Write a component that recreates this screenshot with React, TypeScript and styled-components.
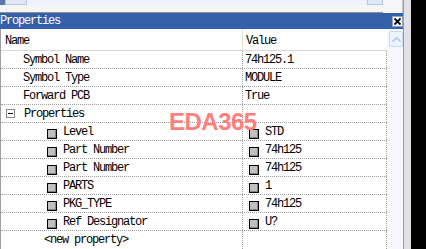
import { FC } from 'react';
import styled, { createGlobalStyle } from 'styled-components';

const GlobalStyle = createGlobalStyle`
  html, body { margin: 0; padding: 0; background: #000; }
  * { box-sizing: border-box; }
`;

const mono = `'Liberation Mono', 'DejaVu Sans Mono', monospace`;

type Child = { name: string; value: string };

const topRows: Child[] = [
  { name: 'Symbol Name', value: '74h125.1' },
  { name: 'Symbol Type', value: 'MODULE' },
  { name: 'Forward PCB', value: 'True' },
];

const childRows: Child[] = [
  { name: 'Level', value: 'STD' },
  { name: 'Part Number', value: '74h125' },
  { name: 'Part Number', value: '74h125' },
  { name: 'PARTS', value: '1' },
  { name: 'PKG_TYPE', value: '74h125' },
  { name: 'Ref Designator', value: 'U?' },
];

const App: FC = () => (
  <>
    <GlobalStyle />
    <Page>
      <Main>
        <TopStrip>
          <StripEdge />
          <StripButton />
          <StripFill />
          <StripButton />
          <StripTail />
        </TopStrip>
        <Gap />
        <TitleBar>
          <Title>Properties</Title>
          <CloseButton>
            <svg width="7" height="7" viewBox="0 0 7 7">
              <path d="M0.5 0.5 L6.5 6.5 M6.5 0.5 L0.5 6.5" stroke="#000" strokeWidth="1.8" />
            </svg>
          </CloseButton>
        </TitleBar>
        <Body>
          <Grid>
            <HeaderRow>
              <HeaderCell>Name</HeaderCell>
              <HeaderCell $value>Value</HeaderCell>
            </HeaderRow>
            {topRows.map((row) => (
              <Row key={row.name}>
                <NameCell $indent={22}>{row.name}</NameCell>
                <ValueCell>{row.value}</ValueCell>
              </Row>
            ))}
            <Row>
              <NameCell $indent={5}>
                <Toggle>
                  <svg width="5" height="1" viewBox="0 0 5 1">
                    <rect width="5" height="1" fill="#000" />
                  </svg>
                </Toggle>
                Properties
              </NameCell>
              <ValueCell />
            </Row>
            {childRows.map((row, i) => (
              <Row key={i}>
                <NameCell $indent={46}>
                  <Check />
                  {row.name}
                </NameCell>
                <ValueCell $indent={6}>
                  <Check />
                  {row.value}
                </ValueCell>
              </Row>
            ))}
            <Row $last>
              <NameCell $indent={43}>&lt;new property&gt;</NameCell>
              <ValueCell />
            </Row>
            <Watermark>EDA365</Watermark>
          </Grid>
          <Scrollbar>
            <ScrollUp>
              <svg width="9" height="5" viewBox="0 0 9 5">
                <path d="M0.5 4.5 L4.5 0.8 L8.5 4.5" fill="none" stroke="#b5c9e6" strokeWidth="1.6" />
              </svg>
            </ScrollUp>
          </Scrollbar>
        </Body>
      </Main>
      <Divider />
      <Frame />
    </Page>
  </>
);

export default App;

const Page = styled.div`
  display: flex;
  width: 426px;
  height: 249px;
  overflow: hidden;
  background: #000;
  font-family: ${mono};
  font-size: 12px;
  letter-spacing: -1.2px;
`;

const Main = styled.div`
  display: flex;
  flex-direction: column;
  width: 403px;
  background: #ffffff;
`;

const TopStrip = styled.div`
  display: flex;
  height: 13px;
  background: #f6f6f8;
  border-bottom: 1px solid #8f8f96;
  align-items: flex-start;
`;

const StripEdge = styled.div`
  width: 5px;
  height: 5px;
  background: #5b78a8;
`;

const StripButton = styled.div`
  width: 16px;
  height: 5px;
  background: #dde7f6;
  border: 1px solid #b4c6e2;
  border-top: none;
  &:nth-child(2) { width: 22px; }
`;

const StripFill = styled.div`
  flex: 1;
  height: 5px;
  background: #f0f3fa;
`;

const StripTail = styled.div`
  width: 20px;
  height: 13px;
  border-right: 1px solid #c8c8d0;
  background: #f6f6f8;
`;

const Gap = styled.div`
  height: 2px;
  background: #dcdbe0;
`;

const TitleBar = styled.div`
  display: flex;
  align-items: center;
  justify-content: space-between;
  height: 16px;
  background: #3461a9;
  padding-right: 0;
`;

const Title = styled.span`
  color: #ffffff;
  line-height: 16px;
`;

const CloseButton = styled.div`
  display: flex;
  align-items: center;
  justify-content: center;
  width: 11px;
  height: 11px;
  margin-top: 1px;
  background: #f4f4f4;
  border: 1px solid #9aa4b8;
`;

const Body = styled.div`
  display: flex;
  flex: 1;
`;

const Grid = styled.div`
  position: relative;
  width: 387px;
  border-left: 1px solid #a0a0a0;
  background: #ffffff;
`;

const HeaderRow = styled.div`
  display: grid;
  grid-template-columns: 242px 144px;
  height: 22px;
  border-bottom: 1px solid #d8d8d8;
`;

const HeaderCell = styled.div<{ $value?: boolean }>`
  display: flex;
  align-items: center;
  padding-left: ${({ $value }) => ($value ? 3 : 4)}px;
  padding-top: 2px;
  color: #000;
  border-right: 1px solid ${({ $value }) => ($value ? 'transparent' : '#e4e4e4')};
`;

const Row = styled.div<{ $last?: boolean }>`
  display: grid;
  grid-template-columns: 242px 144px;
  height: 18px;
  border-bottom: ${({ $last }) => ($last ? 'none' : '1px dotted #a0a0a0')};
`;

const NameCell = styled.div<{ $indent: number }>`
  display: flex;
  align-items: center;
  gap: 6px;
  padding-left: ${({ $indent }) => $indent}px;
  border-right: 1px dotted #a0a0a0;
  color: #000;
  white-space: nowrap;
`;

const ValueCell = styled.div<{ $indent?: number }>`
  display: flex;
  align-items: center;
  gap: 6px;
  padding-left: ${({ $indent }) => $indent ?? 2}px;
  border-right: 1px dotted #a0a0a0;
  color: #000;
  white-space: nowrap;
`;

const Toggle = styled.span`
  display: flex;
  align-items: center;
  justify-content: center;
  width: 9px;
  height: 9px;
  margin-right: 3px;
  border: 1px solid #8c8c8c;
  background: #fff;
`;

const Check = styled.span`
  width: 10px;
  height: 10px;
  margin-top: 5px;
  background: #c0c0c0;
  border: 1px solid #000;
  box-shadow: inset -1px -1px 0 #808080;
`;

const Watermark = styled.div`
  position: absolute;
  left: 168px;
  top: 79px;
  font-family: 'Liberation Sans', Arial, sans-serif;
  font-weight: bold;
  font-size: 24px;
  letter-spacing: -0.5px;
  color: #ff7f7f;
  pointer-events: none;
`;

const Scrollbar = styled.div`
  flex: 1;
  background: #f7f9ff;
  padding: 2px 0 0 2px;
`;

const ScrollUp = styled.div`
  display: flex;
  align-items: center;
  justify-content: center;
  width: 14px;
  height: 16px;
  border: 1px solid #c9d8ee;
  border-radius: 2px;
  background: #eef3fc;
`;

const Divider = styled.div`
  width: 1px;
  background: #9a9aa2;
`;

const Frame = styled.div`
  width: 7px;
  background: #e2e1e6;
`;
